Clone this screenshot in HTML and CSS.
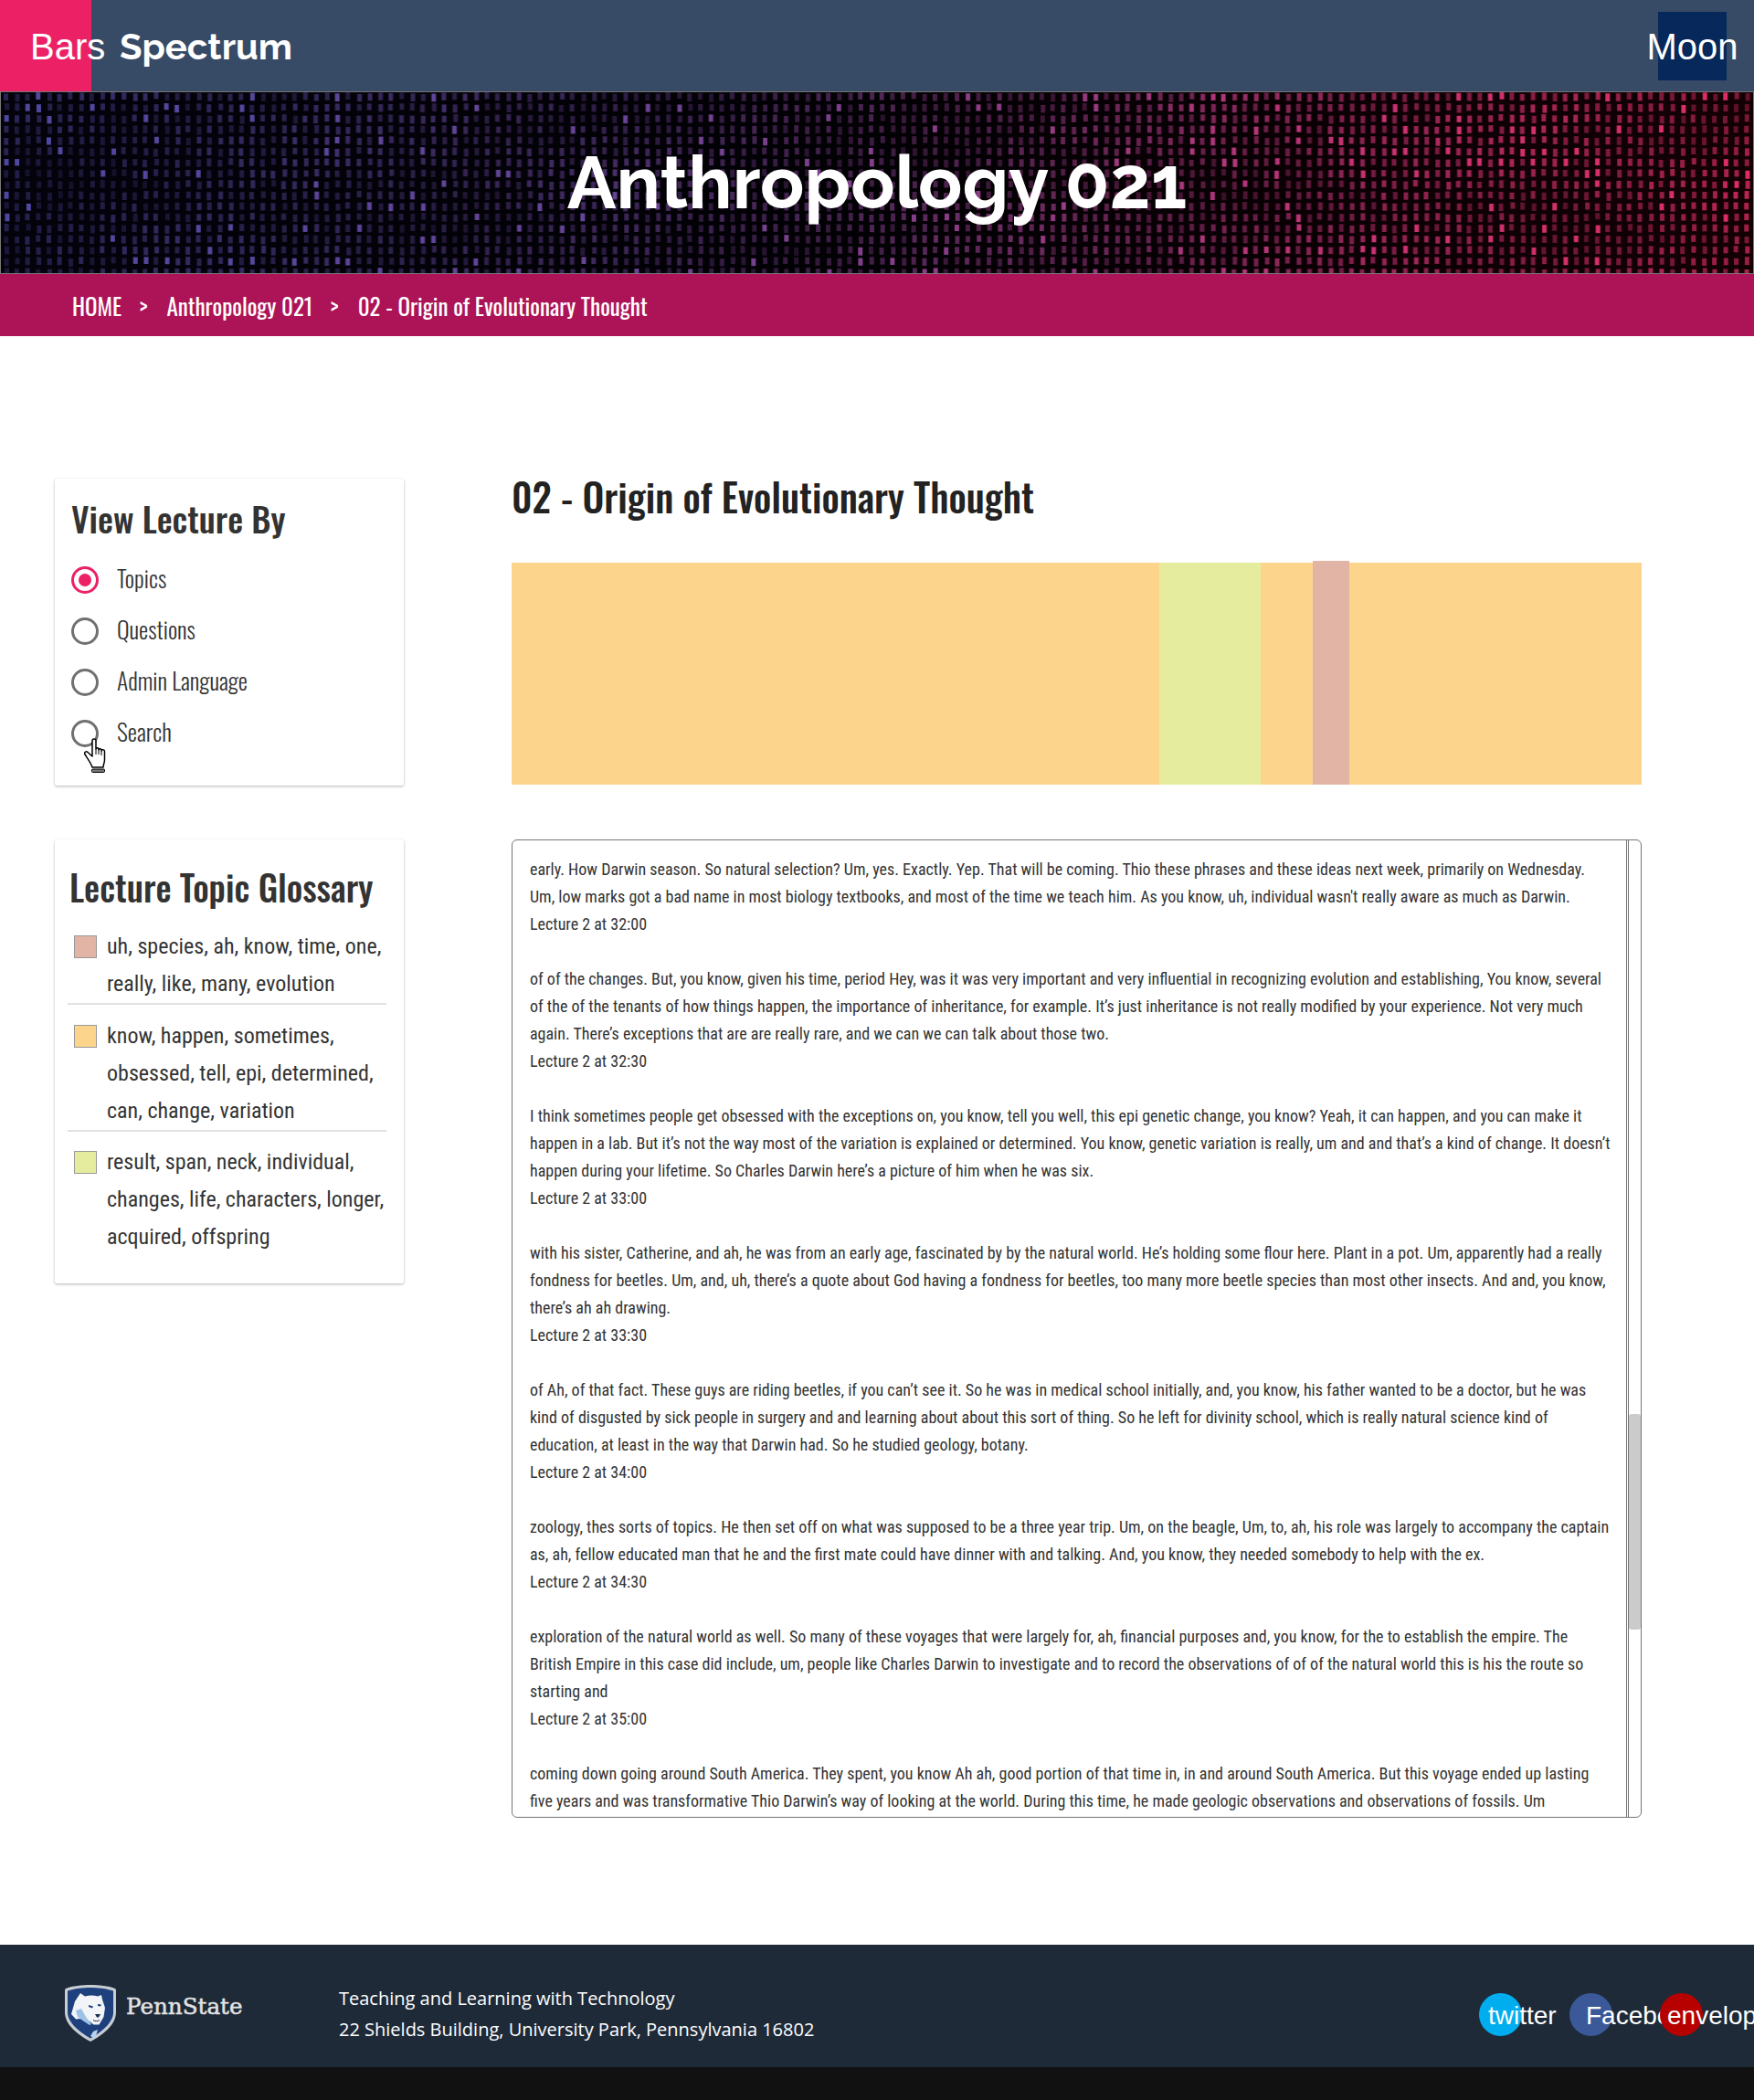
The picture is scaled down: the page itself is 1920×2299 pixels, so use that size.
FILE: index.html
```html
<!DOCTYPE html>
<html lang="en">
<head>
    <meta charset="UTF-8">
    <meta name="viewport" content="width=device-width, initial-scale=1.0">
    <title>Spectrum - Anthropology 021</title>
    <link rel="stylesheet" href="styles.css">
</head>
<body>
    <header class="topbar">
        <div class="menu-btn"><span class="menu-label">Bars</span></div>
        <div class="brand">Spectrum</div>
        <div class="theme-btn"><span class="theme-label">Moon</span></div>
    </header>

    <section class="hero">
        <canvas id="hero-canvas" class="hero-canvas" width="1920" height="198"></canvas>
        <h1 class="hero-title">Anthropology 021</h1>
    </section>

    <nav class="crumbs">
        <a>HOME</a><span class="crumb-sep">&gt;</span>
        <a>Anthropology 021</a><span class="crumb-sep">&gt;</span>
        <a>02 - Origin of Evolutionary Thought</a>
    </nav>

    <main class="content">
        <aside class="sidebar">
            <div class="card card-view">
                <h3 class="view-title">View Lecture By</h3>
                <div class="radio-row"><span class="radio radio-on"></span>Topics</div>
                <div class="radio-row"><span class="radio"></span>Questions</div>
                <div class="radio-row"><span class="radio"></span>Admin Language</div>
                <div class="radio-row radio-last"><span class="radio"></span>Search
                    <svg class="hand" viewBox="0 0 26 38" width="26" height="38">
                        <path d="M9 3c0-2.600 4-2.600 4 0v9c0-1.800 3-1.800 3 0v1c0-1.800 3-1.800 3 0v1c0-1.800 3.500-1.800 3.500.5v9.500c0 3-1.500 5-1.500 8H9c-1-4-4-8-8-14-1.200-2.200 1.200-4.200 3-2.500l5 4.500z" fill="#fff" stroke="#000" stroke-width="1.500" stroke-linejoin="round"/>
                        <path d="M13 12v6M16 13v5M19 14v5" stroke="#000" stroke-width="1" fill="none"/>
                        <rect x="8.500" y="34" width="14" height="3.500" rx="1" fill="#777" stroke="#000" stroke-width="1"/>
                    </svg>
                </div>
            </div>

            <div class="card card-glossary">
                <h3 class="glossary-title">Lecture Topic Glossary</h3>
                <div class="topic">
                    <span class="swatch swatch-rose"></span>
                    <p>uh, species, ah, know, time, one,<br>really, like, many, evolution</p>
                </div>
                <div class="topic">
                    <span class="swatch swatch-orange"></span>
                    <p>know, happen, sometimes,<br>obsessed, tell, epi, determined,<br>can, change, variation</p>
                </div>
                <div class="topic">
                    <span class="swatch swatch-green"></span>
                    <p>result, span, neck, individual,<br>changes, life, characters, longer,<br>acquired, offspring</p>
                </div>
            </div>
        </aside>

        <section class="lecture">
            <h2 class="lecture-title">02 - Origin of Evolutionary Thought</h2>

            <div class="timeline">
                <div class="seg seg-orange" style="width: 709px"></div>
                <div class="seg seg-green" style="width: 111px"></div>
                <div class="seg seg-orange" style="width: 57px"></div>
                <div class="seg seg-rose" style="width: 40px"></div>
                <div class="seg seg-orange" style="width: 320px"></div>
            </div>

            <div class="transcript">
                <div class="transcript-text">
                    <p>early. How Darwin season. So natural selection? Um, yes. Exactly. Yep. That will be coming. Thio these phrases and these ideas next week, primarily on Wednesday.<br>
                    Um, low marks got a bad name in most biology textbooks, and most of the time we teach him. As you know, uh, individual wasn't really aware as much as Darwin.<br>
                    Lecture 2 at 32:00</p>
                    <p>of of the changes. But, you know, given his time, period Hey, was it was very important and very influential in recognizing evolution and establishing, You know, several<br>
                    of the of the tenants of how things happen, the importance of inheritance, for example. It’s just inheritance is not really modified by your experience. Not very much<br>
                    again. There’s exceptions that are are really rare, and we can we can talk about those two.<br>
                    Lecture 2 at 32:30</p>
                    <p>I think sometimes people get obsessed with the exceptions on, you know, tell you well, this epi genetic change, you know? Yeah, it can happen, and you can make it<br>
                    happen in a lab. But it’s not the way most of the variation is explained or determined. You know, genetic variation is really, um and and that’s a kind of change. It doesn’t<br>
                    happen during your lifetime. So Charles Darwin here’s a picture of him when he was six.<br>
                    Lecture 2 at 33:00</p>
                    <p>with his sister, Catherine, and ah, he was from an early age, fascinated by by the natural world. He’s holding some flour here. Plant in a pot. Um, apparently had a really<br>
                    fondness for beetles. Um, and, uh, there’s a quote about God having a fondness for beetles, too many more beetle species than most other insects. And and, you know,<br>
                    there’s ah ah drawing.<br>
                    Lecture 2 at 33:30</p>
                    <p>of Ah, of that fact. These guys are riding beetles, if you can’t see it. So he was in medical school initially, and, you know, his father wanted to be a doctor, but he was<br>
                    kind of disgusted by sick people in surgery and and learning about about this sort of thing. So he left for divinity school, which is really natural science kind of<br>
                    education, at least in the way that Darwin had. So he studied geology, botany.<br>
                    Lecture 2 at 34:00</p>
                    <p>zoology, thes sorts of topics. He then set off on what was supposed to be a three year trip. Um, on the beagle, Um, to, ah, his role was largely to accompany the captain<br>
                    as, ah, fellow educated man that he and the first mate could have dinner with and talking. And, you know, they needed somebody to help with the ex.<br>
                    Lecture 2 at 34:30</p>
                    <p>exploration of the natural world as well. So many of these voyages that were largely for, ah, financial purposes and, you know, for the to establish the empire. The<br>
                    British Empire in this case did include, um, people like Charles Darwin to investigate and to record the observations of of of the natural world this is his the route so<br>
                    starting and<br>
                    Lecture 2 at 35:00</p>
                    <p>coming down going around South America. They spent, you know Ah ah, good portion of that time in, in and around South America. But this voyage ended up lasting<br>
                    five years and was transformative Thio Darwin’s way of looking at the world. During this time, he made geologic observations and observations of fossils. Um</p>
                </div>
                <div class="scrollbar"><div class="scrollbar-thumb"></div></div>
            </div>
        </section>
    </main>

    <footer class="footer">
        <div class="footer-logo">
            <svg class="shield" viewBox="0 0 56 62" width="56" height="62">
                <path d="M28 0C19 0 8 1 1 4Q0 4.500 0 6V30C0 44 15 55 28 62C41 55 56 44 56 30V6Q56 4.500 55 4C48 1 37 0 28 0z" fill="#c8cdd4"/>
                <path d="M28 3C20 3 10 4 3 6.500V30C3 42 17 52 28 58.500C39 52 53 42 53 30V6.500C46 4 36 3 28 3z" fill="#1e407c"/>
                <path d="M17 9l5 3.500c5-1.500 10-1.500 14 0l4-1.500 1 5 3 9-1.500 10-5 8.500h-6l-9-7-10.500 1L7 32l4-14z" fill="#f2f4f7"/>
                <path d="M12 28l6-2 5 9 6 8-2 1-9-6-4-3z" fill="#9cc3e6"/>
                <path d="M31 51l5-2-3 10-5-3z" fill="#b9d4ee"/>
                <path d="M26 22l5 1.500-1 2-4-1.500zM36 21l4 .5-1 2-3-.5z" fill="#1e407c"/>
                <path d="M33 32h6l-2 3.500h-2z" fill="#1b2f52"/>
                <path d="M31 38.500c2 1.500 5 1.500 7 0" fill="none" stroke="#1b2f52" stroke-width="1"/>
            </svg>
            <span class="wordmark">PennState</span>
        </div>
        <div class="footer-address">
            <div>Teaching and Learning with Technology</div>
            <div>22 Shields Building, University Park, Pennsylvania 16802</div>
        </div>
        <div class="social">
            <a class="social-btn social-twitter">twitter</a>
            <a class="social-btn social-facebook">Facebook</a>
            <a class="social-btn social-mail">envelope</a>
        </div>
    </footer>
    <div class="footer-strip"></div>

    <script src="hero.js"></script>
</body>
</html>
```

FILE: styles.css
```css
html, body {
    margin: 0;
    padding: 0;
    overflow-x: hidden;
}
body {
    background-color: #fff;
    color: #333;
    font-family: "Roboto Condensed", "Roboto", sans-serif;
}
h1, h2, h3, p {
    margin: 0;
}

/* top bar */
.topbar {
    display: flex;
    align-items: center;
    height: 100px;
    background-color: #374a66;
    color: #fff;
}
.menu-btn {
    width: 100px;
    height: 100px;
    background-color: #ec2064;
    flex-shrink: 0;
    display: flex;
    align-items: center;
    padding: 2px 0 0 33px;
    box-sizing: border-box;
    white-space: nowrap;
}
.menu-label, .theme-label {
    font-family: "Liberation Sans", Arial, sans-serif;
    font-size: 40px;
}
.brand {
    font-family: "Raleway", "Lato", sans-serif;
    font-weight: 700;
    font-size: 40px;
    margin-left: 31px;
}
.theme-btn {
    width: 75px;
    height: 75px;
    margin-left: auto;
    margin-right: 30px;
    padding-top: 2px;
    box-sizing: border-box;
    background-color: #06285a;
    display: flex;
    align-items: center;
    justify-content: center;
    white-space: nowrap;
}

/* hero */
.hero {
    position: relative;
    height: 198px;
    border: 1px solid #777;
    background-color: #000;
    display: flex;
    align-items: center;
    justify-content: center;
}
.hero-canvas {
    position: absolute;
    left: 0;
    top: 0;
    width: 100%;
    height: 100%;
}
.hero-title {
    position: relative;
    font-family: "Raleway", "Lato", sans-serif;
    font-weight: 700;
    font-size: 80px;
    line-height: 1;
    color: #fff;
}

/* breadcrumb */
.crumbs {
    display: flex;
    align-items: center;
    height: 68px;
    padding-left: 79px;
    background-color: #ad1457;
    color: #fff;
    font-family: "Oswald", "Roboto", sans-serif;
    font-weight: 400;
    font-size: 25px;
}
.crumb-sep {
    margin: 0 21px 0 19px;
}

/* page columns */
.content {
    display: grid;
    grid-template-columns: 382px 1237px;
    column-gap: 118px;
    padding: 156px 0 139px 60px;
}
.card {
    background-color: #fff;
    border-radius: 2px;
    box-shadow: 0 1px 3px rgba(0, 0, 0, 0.3);
    box-sizing: border-box;
}
.card-view {
    height: 336px;
    padding: 17px 18px 0;
    margin-bottom: 59px;
}
.view-title, .glossary-title {
    font-family: "Oswald", "Roboto", sans-serif;
    font-weight: 500;
    font-size: 38.4px;
    line-height: 53px;
    color: #333;
}
.view-title {
    font-size: 38px;
}
.radio-row {
    position: relative;
    display: flex;
    align-items: center;
    height: 56px;
    padding-bottom: 6px;
    box-sizing: border-box;
    font-family: "Oswald", "Roboto", sans-serif;
    font-weight: 300;
    font-size: 25.6px;
}
.view-title + .radio-row {
    margin-top: 13px;
}
.radio {
    width: 30px;
    height: 30px;
    border: 3.5px solid #707070;
    border-radius: 50%;
    box-sizing: border-box;
    margin: 6px 20px 0 0;
    position: relative;
}
.radio-on {
    border-color: #ec2064;
}
.radio-on::after {
    content: "";
    position: absolute;
    left: 4.5px;
    top: 4.5px;
    width: 14px;
    height: 14px;
    border-radius: 50%;
    background-color: #ec2064;
}
.hand {
    position: absolute;
    left: 14px;
    top: 33px;
}

/* glossary */
.card-glossary {
    height: 486px;
    padding: 25px 19px 0 14px;
}
.glossary-title {
    margin: 0 0 19px 2px;
}
.topic {
    display: flex;
    padding: 0 0 0 7px;
    border-bottom: 2px solid #e2e2e2;
    margin-bottom: 13.5px;
}
.topic:last-child {
    border-bottom: none;
}
.topic p {
    font-size: 24px;
    line-height: 41px;
    white-space: nowrap;
}
.swatch {
    flex-shrink: 0;
    width: 25px;
    height: 25px;
    border: 1px solid #999;
    box-sizing: border-box;
    margin: 8px 11px 0 0;
}
.swatch-rose { background-color: #e1b4a5; }
.swatch-orange { background-color: #fdd48b; }
.swatch-green { background-color: #e6ec9d; }

/* lecture column */
.lecture-title {
    font-family: "Oswald", "Roboto", sans-serif;
    font-weight: 500;
    font-size: 42.3px;
    line-height: 50px;
    color: #222;
    margin-bottom: 48px;
    margin-top: -6px;
}
.timeline {
    display: flex;
    height: 243px;
    margin-bottom: 60px;
}
.seg-orange { background-color: #fdd48b; }
.seg-green { background-color: #e6ec9d; }
.seg-rose {
    background-color: #e1b4a5;
    margin-top: -2px;
}

/* transcript box, the scrollbar is drawn so it shows in the shot */
.transcript {
    display: flex;
    height: 1071px;
    border: 1px solid #757575;
    border-radius: 6px;
    box-sizing: border-box;
    overflow: hidden;
}
.transcript-text {
    flex: 1;
    overflow: hidden;
    padding: 17px 0 0 19px;
    border-right: 1px solid #757575;
    font-size: 18px;
    line-height: 30px;
    white-space: nowrap;
}
.transcript-text p {
    margin-bottom: 30px;
}
.scrollbar {
    width: 13px;
    border-left: 1px solid #757575;
    margin-left: 1px;
    padding-top: 628px;
}
.scrollbar-thumb {
    height: 236px;
    background-color: #cbcbcb;
    border-radius: 3px;
}

/* footer */
.footer {
    display: flex;
    align-items: center;
    height: 134px;
    background-color: #1e2a38;
    color: #fff;
    position: relative;
}
.footer-logo {
    display: flex;
    align-items: center;
    width: 371px;
    padding-left: 71px;
    box-sizing: border-box;
    flex-shrink: 0;
}
.shield {
    margin-top: 16px;
}
.wordmark {
    font-family: "DejaVu Serif", "Liberation Serif", serif;
    font-size: 24.6px;
    color: #e2e2e2;
    margin-left: 11px;
    -webkit-text-stroke: 0.5px #e2e2e2;
}
.footer-address {
    font-family: "Open Sans", sans-serif;
    font-size: 20px;
    line-height: 34px;
    margin-top: 18px;
}
.social {
    display: flex;
    position: absolute;
    left: 1619px;
    top: 53px;
}
.social-btn {
    width: 47px;
    height: 47px;
    border-radius: 50%;
    margin-right: 52px;
    box-sizing: border-box;
    font-family: "Liberation Sans", Arial, sans-serif;
    font-size: 28px;
    line-height: 49px;
    white-space: nowrap;
    color: #fff;
}
.social-twitter {
    background-color: #00aeef;
    padding-left: 10px;
}
.social-facebook {
    background-color: #3b5998;
    padding-left: 18px;
}
.social-mail {
    background-color: #b70000;
    padding-left: 8px;
}
.footer-strip {
    height: 36px;
    background-color: #111;
}
```

FILE: hero.js
```js
// dotted data texture behind the title
const canvas = document.getElementById('hero-canvas');
const ctx = canvas.getContext('2d');

let seed = 21;
function rand() {
    seed = (seed * 16807) % 2147483647;
    return seed / 2147483647;
}

const stops = [
    [0, [85, 80, 175]],
    [0.35, [115, 75, 165]],
    [0.6, [165, 65, 145]],
    [0.8, [225, 55, 125]],
    [1, [245, 50, 110]]
];

function colorAt(t) {
    for (let i = 1; i < stops.length; i++) {
        if (t <= stops[i][0]) {
            const a = stops[i - 1];
            const b = stops[i];
            const k = (t - a[0]) / (b[0] - a[0]);
            return a[1].map((v, n) => Math.round(v + (b[1][n] - v) * k));
        }
    }
    return stops[stops.length - 1][1];
}

const bg = ctx.createLinearGradient(0, 0, 1920, 0);
bg.addColorStop(0, '#04030c');
bg.addColorStop(0.5, '#020104');
bg.addColorStop(1, '#130005');
ctx.fillStyle = bg;
ctx.fillRect(0, 0, 1920, 198);

ctx.filter = 'blur(0.5px)';
for (let row = 0; row < 17; row++) {
    for (let col = 0; col < 165; col++) {
        const x = col * 11.7 + 3 + rand() * 1.5;
        const y = row * 12 + rand() * 2;
        const t = x / 1920;
        const c = colorAt(t);
        // darker patches so the field isn't even
        const patch = 0.8 + 0.2 * Math.sin(x / 97 + Math.sin(y / 40)) * Math.cos(y / 33 + x / 210);
        let a = (0.28 + rand() * 0.3 + t * 0.25) * patch;
        if (rand() < 0.06) a = 0.9;
        ctx.fillStyle = `rgba(${c[0]}, ${c[1]}, ${c[2]}, ${a})`;
        ctx.fillRect(x, y, 5, 7 + rand() * 2);
    }
}
```
